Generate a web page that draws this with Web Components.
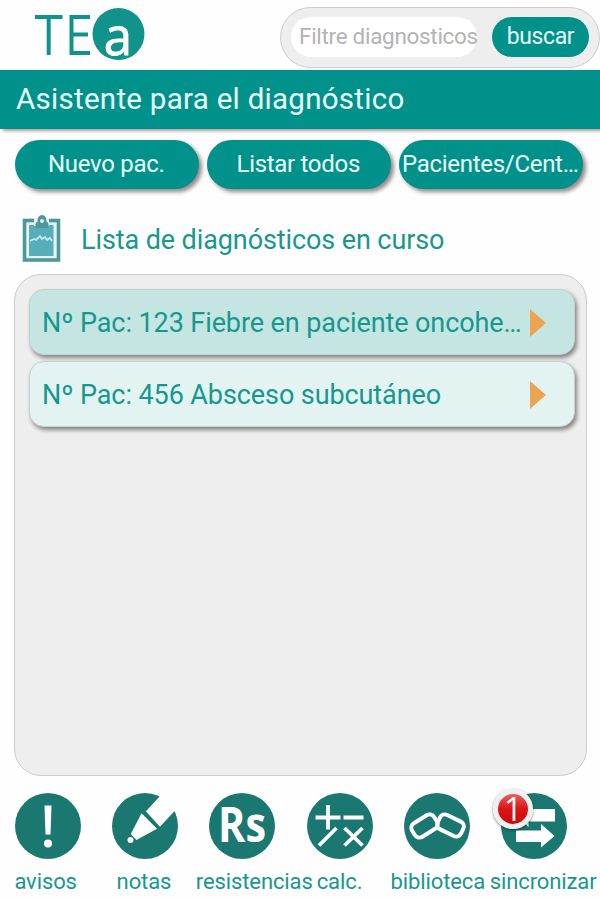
<!DOCTYPE html>
<html lang="es">
<head>
<meta charset="utf-8">
<title>TEa - Asistente para el diagnóstico</title>
<style>
  html, body { margin: 0; height: 100%; }
  body {
    width: 600px;
    height: 900px;
    overflow: hidden;
    background: #fefefe;
    color: #16988f;
    font-family: Roboto, "Liberation Sans", sans-serif;
  }
</style>
</head>
<body>
<tea-app>
  <tea-header slot="header" placeholder="Filtre diagnosticos">buscar</tea-header>
  <tea-title slot="title">Asistente para el diagnóstico</tea-title>
  <tea-button slot="actions">Nuevo pac.</tea-button>
  <tea-button slot="actions">Listar todos</tea-button>
  <tea-button slot="actions">Pacientes/Cent…</tea-button>
  <tea-heading slot="heading">Lista de diagnósticos en curso</tea-heading>
  <diagnosis-item active>Nº Pac: 123 Fiebre en paciente oncohe…</diagnosis-item>
  <diagnosis-item>Nº Pac: 456 Absceso subcutáneo</diagnosis-item>
  <nav-item slot="nav" icon="avisos" style="--shift:-2px">avisos</nav-item>
  <nav-item slot="nav" icon="notas" style="--shift:-1px">notas</nav-item>
  <nav-item slot="nav" icon="resistencias" style="--shift:12px">resistencias</nav-item>
  <nav-item slot="nav" icon="calc" style="--shift:0px">calc.</nav-item>
  <nav-item slot="nav" icon="biblioteca" style="--shift:1px">biblioteca</nav-item>
  <nav-item slot="nav" icon="sincronizar" badge="1" style="--shift:9px">sincronizar</nav-item>
</tea-app>

<script>
const ICONS = {
  avisos: `
    <circle cx="34" cy="34" r="33"/>
    <path fill="#fff" d="M30.5 13.5h7l-1 29h-5z"/>
    <circle fill="#fff" cx="34" cy="51.5" r="4"/>`,
  notas: `
    <circle cx="34" cy="34" r="33"/>
    <path fill="#fefefe" d="M34.7 19.5 54-1.3 70 12 48.3 35.5z"/>
    <path fill="none" stroke="#1b7870" stroke-width="2.4" d="M32.5 18.5 49 36.5"/>
    <path fill="#fff" d="M30.5 21.3 46 36.8 25.5 48 19.8 42z"/>
    <circle fill="#fff" cx="19.5" cy="48" r="3"/>`,
  resistencias: `
    <circle cx="34" cy="34" r="33"/>
    <text fill="#fff" x="34" y="49.5" text-anchor="middle" font-family="Open Sans, sans-serif" font-weight="700" font-size="48" textLength="48" lengthAdjust="spacingAndGlyphs">Rs</text>`,
  calc: `
    <circle cx="34" cy="34" r="33"/>
    <path fill="none" stroke="#fff" stroke-width="3.8" d="M9.5 25.5h25M22 13v24.5M37.5 25.5h20M13 53.500l17.5-17.5M38.5 36l18 17.5M56.5 36l-18 17.5"/>`,
  biblioteca: `
    <circle cx="34" cy="34" r="33"/>
    <g fill="none" stroke="#fff" stroke-width="4">
      <rect x="8.5" y="26" width="26" height="16" rx="5.5" transform="rotate(-32 21.5 34)"/>
      <rect x="34.5" y="25.5" width="26" height="16" rx="5.5" transform="rotate(26 47.5 33.5)"/>
    </g>`,
  sincronizar: `
    <circle cx="34" cy="34" r="33"/>
    <path fill="#fff" d="M55 17v12.5H28.5V35L15 23l13.5-12v6z"/>
    <path fill="#fff" d="M16 38.5h25V32l13.5 12L41 55.5V50H16z"/>`
};

class TeaApp extends HTMLElement {
  constructor() {
    super();
    this.attachShadow({ mode: 'open' }).innerHTML = `
      <style>
        :host { display: flex; flex-direction: column; height: 900px; }
        .actions { display: flex; gap: 8px; padding: 11px 17px 0 15px; }
        .panel {
          box-sizing: border-box;
          width: 573px;
          height: 502px;
          margin: 11px 0 0 14px;
          padding: 14px 11px 0 14px;
          display: flex;
          flex-direction: column;
          gap: 6px;
          background: #eee;
          border: 1.5px solid #cbcbcb;
          border-radius: 27px;
        }
        nav { display: grid; grid-template-columns: repeat(6, 97.3px); padding-top: 14px; margin-left: -1px; }
      </style>
      <slot name="header"></slot>
      <slot name="title"></slot>
      <div class="actions"><slot name="actions"></slot></div>
      <slot name="heading"></slot>
      <div class="panel"><slot></slot></div>
      <nav><slot name="nav"></slot></nav>`;
  }
}

class TeaHeader extends HTMLElement {
  constructor() {
    super();
    this.attachShadow({ mode: 'open' }).innerHTML = `
      <style>
        :host { display: flex; justify-content: space-between; height: 70px; }
        svg { display: block; margin-left: 30px; }
        .search {
          box-sizing: border-box;
          display: flex;
          align-items: center;
          justify-content: space-between;
          width: 320px;
          height: 61px;
          margin-top: 6.5px;
          padding: 0 10px;
          background: #eee;
          border: 1.5px solid #ccc;
          border-radius: 31px;
        }
        .field {
          box-sizing: border-box;
          width: 186px;
          height: 40px;
          padding-left: 8px;
          border-radius: 20px;
          background: #fff;
          color: #b3b3b3;
          font-size: 22.5px;
          line-height: 38px;
          letter-spacing: -.3px;
          white-space: nowrap;
        }
        .go {
          width: 97px;
          height: 40px;
          border-radius: 20px;
          background: #00928a;
          color: #e9fffc;
          font-size: 23px;
          line-height: 40px;
          letter-spacing: -.4px;
          text-align: center;
        }
      </style>
      <svg width="120" height="70" viewBox="30 0 120 70">
        <path fill="none" stroke="#10938a" stroke-width="4" d="M35 17h27.5M48.7 17v38M90 17H71.5v36H90M71.5 34.5H88"/>
        <circle cx="118.5" cy="34" r="26" fill="#10938a"/>
        <text x="118" y="54.5" text-anchor="middle" fill="#fff" stroke="#fff" stroke-width=".8" font-family="Open Sans, sans-serif" font-size="51">a</text>
      </svg>
      <div class="search">
        <div class="field"></div>
        <div class="go"><slot></slot></div>
      </div>`;
  }

  connectedCallback() {
    this.shadowRoot.querySelector('.field').textContent = this.getAttribute('placeholder');
  }
}

class TeaTitle extends HTMLElement {
  constructor() {
    super();
    this.attachShadow({ mode: 'open' }).innerHTML = `
      <style>
        :host {
          display: block;
          height: 59px;
          padding-left: 16px;
          background: #00928a;
          box-shadow: 3px 2px 3px rgba(90, 60, 60, .5);
          color: #e9fffc;
          font-size: 29.5px;
          line-height: 59px;
          letter-spacing: .28px;
          white-space: nowrap;
        }
      </style>
      <slot></slot>`;
  }
}

class TeaButton extends HTMLElement {
  constructor() {
    super();
    this.attachShadow({ mode: 'open' }).innerHTML = `
      <style>
        :host {
          box-sizing: border-box;
          display: block;
          width: 184px;
          height: 49px;
          padding-right: 1.5px;
          border-radius: 25px;
          background: #00928a;
          box-shadow: 3px 3px 4px rgba(60, 40, 40, .55);
          color: #e9fffc;
          font-size: 24px;
          line-height: 49px;
          letter-spacing: -.3px;
          text-align: center;
          white-space: nowrap;
        }
      </style>
      <slot></slot>`;
  }
}

class TeaHeading extends HTMLElement {
  constructor() {
    super();
    this.attachShadow({ mode: 'open' }).innerHTML = `
      <style>
        :host {
          display: flex;
          align-items: flex-start;
          gap: 19px;
          height: 48px;
          margin: 26px 0 0 22px;
          font-size: 27px;
          line-height: 50px;
          letter-spacing: -.1px;
          white-space: nowrap;
        }
        svg { flex: none; }
      </style>
      <svg width="40" height="48" viewBox="0 0 40 48">
        <rect x="2.5" y="5.5" width="34" height="39.5" fill="#e4f3f4" stroke="#4e989b" stroke-width="3.6"/>
        <rect x="7" y="10" width="24.5" height="31" fill="#57aebb"/>
        <path fill="#e4f3f4" d="M12 3h15v8H12z"/>
        <path fill="#4e989b" d="M13.5 13V9q0-2 2-2 0-7 4.500-7t4.500 7q2 0 2 2v4z"/>
        <circle cx="20" cy="6" r="2" fill="#d7efed"/>
        <path fill="none" stroke="#c5e8eb" stroke-width="1.8" d="M8 26l4-2 2 1 4-4 2 3 3-2 2 3 3-2 2 3"/>
      </svg>
      <span><slot></slot></span>`;
  }
}

class DiagnosisItem extends HTMLElement {
  constructor() {
    super();
    this.attachShadow({ mode: 'open' }).innerHTML = `
      <style>
        :host {
          box-sizing: border-box;
          display: flex;
          align-items: center;
          justify-content: space-between;
          height: 66px;
          padding: 2px 28px 0 12px;
          border: 1px solid #c3d2d0;
          border-radius: 15px;
          background: #e3f3f1;
          box-shadow: 2px 3px 4px rgba(0, 0, 0, .45);
          font-size: 27px;
          line-height: 32px;
          letter-spacing: -.09px;
          white-space: nowrap;
        }
        :host([active]) { background: #c5e5e2; }
        svg { flex: none; }
      </style>
      <span><slot></slot></span>
      <svg width="16" height="28" viewBox="0 0 16 28"><path fill="#eda452" d="M0 0 16 14 0 28z"/></svg>`;
  }
}

class NavItem extends HTMLElement {
  connectedCallback() {
    const badge = this.getAttribute('badge');
    this.attachShadow({ mode: 'open' }).innerHTML = `
      <style>
        :host { display: flex; flex-direction: column; align-items: center; font-size: 22px; letter-spacing: -.1px; }
        .icon { position: relative; height: 68px; margin-top: 2px; }
        svg { display: block; fill: #1b7870; letter-spacing: 0; }
        .label { line-height: 26px; margin-top: 9px; white-space: nowrap; transform: translateX(var(--shift)); }
        .badge {
          position: absolute;
          left: -7px;
          top: -3px;
          box-sizing: border-box;
          width: 40px;
          height: 40px;
          border: 5px solid #f0f0f0;
          border-radius: 50%;
          background: linear-gradient(#e8605c, #dc1414 50%, #c90c0c);
          box-shadow: 0 1px 3px rgba(0, 0, 0, .5);
          color: #fff;
          font: 32px/30px "Open Sans", sans-serif;
          text-align: center;
        }
      </style>
      <div class="icon">
        <svg width="68" height="68" viewBox="0 0 68 68">${ICONS[this.getAttribute('icon')]}</svg>
        ${badge ? `<div class="badge">${badge}</div>` : ''}
      </div>
      <span class="label"><slot></slot></span>`;
  }
}

customElements.define('tea-app', TeaApp);
customElements.define('tea-header', TeaHeader);
customElements.define('tea-title', TeaTitle);
customElements.define('tea-button', TeaButton);
customElements.define('tea-heading', TeaHeading);
customElements.define('diagnosis-item', DiagnosisItem);
customElements.define('nav-item', NavItem);
</script>
</body>
</html>
